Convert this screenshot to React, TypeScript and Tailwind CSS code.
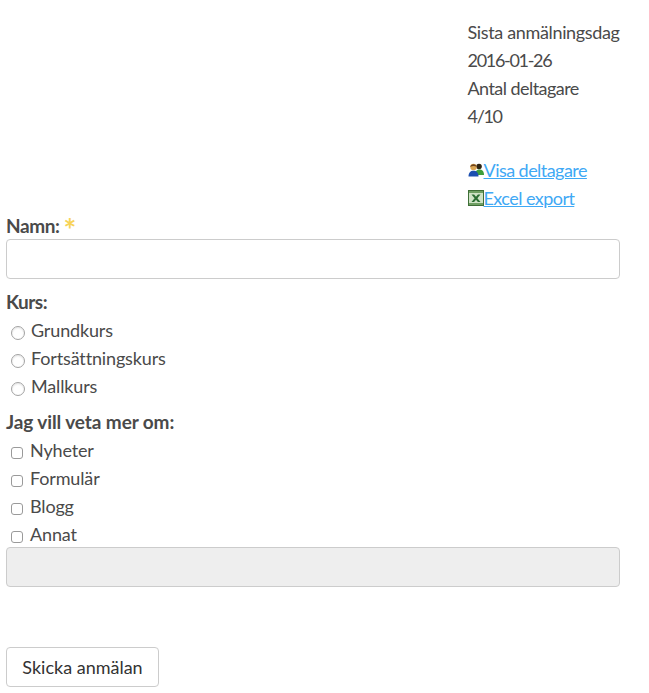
const font = "font-['Lato','Liberation_Sans',sans-serif]";

function Radio({ label }: { label: string }) {
  return (
    <label className="flex h-7 items-center">
      <input type="radio" name="kurs" className="ml-[5px] mt-[6px] h-[14px] w-[14px] shrink-0 appearance-none rounded-full border border-[#a3a3a3] bg-white shadow-[inset_0_1px_2px_#e2e2e2]" />
      <span className="ml-1.5 tracking-[-0.15px] text-[#4a4a4a]">{label}</span>
    </label>
  );
}

function Check({ label }: { label: string }) {
  return (
    <label className="flex h-7 items-center">
      <input type="checkbox" className="ml-[5px] mt-[5px] h-3 w-3 shrink-0 appearance-none rounded-[3px] border border-[#9a9a9a] bg-white" />
      <span className="ml-[7px] tracking-[-0.15px] text-[#4a4a4a]">{label}</span>
    </label>
  );
}

function People() {
  return (
    <svg width="16" height="14" viewBox="0 0 16 14" className="shrink-0">
      <circle cx="11" cy="3.500" r="2.800" fill="#2f2413" />
      <path d="M7 12c0-4 2-5.500 4.500-5.500S16 8 16 12z" fill="#3f9e3a" />
      <circle cx="5.500" cy="4" r="3.200" fill="#dca653" />
      <path d="M2.200 4c.3-3.500 6-4 6.600 0-2-1.200-4.500-1.200-6.600 0z" fill="#6b4320" />
      <path d="M.5 13.500c0-4 2-5.800 5-5.800s5 1.800 5 5.800z" fill="#1c4fb0" />
    </svg>
  );
}

function Excel() {
  return (
    <svg width="16" height="16" viewBox="0 0 16 16" className="shrink-0">
      <rect x="0.500" y="0.500" width="15" height="15" fill="#cfe3c6" stroke="#3f6f38" />
      <rect x="1" y="1" width="14" height="2" fill="#6f9f63" />
      <rect x="1" y="13" width="14" height="2" fill="#6f9f63" />
      <path d="M3.500 4.500h2.600L8 6.700l1.900-2.200h2.600L9.400 8.200l3.100 3.800H9.900L8 9.700 6.100 12H3.500l3.100-3.800z" fill="#2a6d32" />
    </svg>
  );
}

export default function App() {
  return (
    <div className={`${font} h-[693px] w-[649px] overflow-hidden bg-white text-lg leading-7 text-[#4a4a4a]`}>
      <div className="w-[620px] pl-1.5 pt-[18px]">
        <div className="ml-[461.500px] whitespace-nowrap tracking-[-0.55px]">
          <div className="tracking-[-0.35px]">Sista anmälningsdag</div>
          <div className="tracking-[-1.3px]">2016-01-26</div>
          <div>Antal deltagare</div>
          <div className="tracking-[-1.3px]">4/10</div>
          <div className="h-[26px]" />
          <div className="flex items-center">
            <People />
            <a href="#" className="text-[#3fa9f5] underline">Visa deltagare</a>
          </div>
          <div className="flex items-center">
            <Excel />
            <a href="#" className="text-[#3fa9f5] underline">Excel export</a>
          </div>
        </div>

        <form>
          <div className="flex h-[27px] items-center text-[19px] font-bold tracking-[-0.4px]">
            Namn:<span className="ml-1 mt-1.5 text-[30px] font-bold leading-none text-[#f7d358]">*</span>
          </div>
          <input type="text" className="block h-10 w-full rounded border border-[#ccc] bg-white" />

          <div className="mt-[9px] h-7 text-[19px] font-bold tracking-[-0.5px]">Kurs:</div>
          <Radio label="Grundkurs" />
          <Radio label="Fortsättningskurs" />
          <Radio label="Mallkurs" />

          <div className="mt-2 h-7 text-[19px] font-bold tracking-[-0.1px]">Jag vill veta mer om:</div>
          <Check label="Nyheter" />
          <Check label="Formulär" />
          <Check label="Blogg" />
          <Check label="Annat" />
          <input type="text" disabled className="mt-[-1px] block h-10 w-full rounded border border-[#ccc] bg-[#eee]" />

          <button type="button" className="mt-[60px] h-10 w-[153px] rounded border border-[#ccc] bg-white text-center text-[#333]">
            Skicka anmälan
          </button>
        </form>
      </div>
    </div>
  );
}
